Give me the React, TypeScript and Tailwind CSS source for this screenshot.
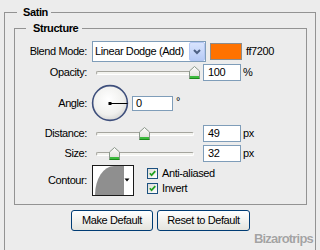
import React from "react";

function Thumb() {
  return (
    <svg width="11" height="13" viewBox="0 0 11 13">
      <defs>
        <linearGradient id="thumbFill" x1="0" y1="0" x2="0" y2="1">
          <stop offset="0" stopColor="#ffffff" />
          <stop offset="1" stopColor="#dadad2" />
        </linearGradient>
      </defs>
      <path d="M5.5 0.5 L10.5 5 V12.5 H0.5 V5 Z" fill="url(#thumbFill)" stroke="#8a978a" />
      <rect x="1" y="10" width="9" height="2" fill="#3dbb3d" />
      <path d="M0.5 12.5 H10.5" stroke="#1b8a1b" />
    </svg>
  );
}

function Slider({ pos }: { pos: number }) {
  return (
    <div className="relative flex w-[106px] h-full items-start">
      <div className="mt-[7px] mx-[4px] flex-1 h-[4px] rounded-full border border-[#a5a59e] border-b-white border-r-white bg-[#f3f3ef]" />
      <div className="absolute top-[2px]" style={{ left: pos }}>
        <Thumb />
      </div>
    </div>
  );
}

function Field({ value, className = "w-[38px] h-[17px]" }: { value: string; className?: string }) {
  return (
    <div className={`${className} border border-[#7f9db9] bg-white pl-[4px] flex items-center`}>
      {value}
    </div>
  );
}

function Row({ label, className, children }: { label: string; className: string; children: React.ReactNode }) {
  return (
    <div className={`flex ${className}`}>
      <div className="w-[72px] h-full flex items-center justify-end">{label}</div>
      <div className="ml-[5px] h-full flex items-center">{children}</div>
    </div>
  );
}

function Check({ label }: { label: string }) {
  return (
    <div className="flex items-center h-[11px]">
      <div className="w-[11px] h-[11px] border border-[#1c5180] bg-gradient-to-br from-[#dcdcd7] to-white flex items-center justify-center">
        <svg width="7" height="7" viewBox="0 0 7 7">
          <path d="M0.8 3.2 L2.6 5.2 L6.3 1.2" stroke="#21a121" strokeWidth="1.7" fill="none" />
        </svg>
      </div>
      <span className="ml-[4px]">{label}</span>
    </div>
  );
}

function XpButton({ label, w }: { label: string; w: string }) {
  return (
    <div className={`${w} h-[21px] rounded-[3px] border border-[#003c74] bg-gradient-to-b from-white to-[#e4e4de] flex items-center justify-center`}>
      {label}
    </div>
  );
}

export default function App() {
  return (
    <div className="w-[320px] h-[250px] overflow-hidden bg-[#ececec] px-[4px] pt-[5px] text-[11px] leading-[13px] tracking-[-0.4px] text-black font-['Liberation_Sans',Arial,sans-serif]">
      <fieldset className="border border-[#939393] min-h-[270px] pl-[9px] pr-[8px]">
        <legend className="ml-[3px] pl-[6px] pr-[3px] font-bold leading-[14px]">Satin</legend>

        <fieldset className="mt-[2px] border border-[#939393] pb-[8px]">
          <legend className="ml-[11px] pl-[7px] pr-[4px] font-bold leading-[14px]">Structure</legend>

          <Row label="Blend Mode:" className="mt-[6px] h-[21px]">
            <div className="w-[114px] h-[21px] border border-[#7f9db9] bg-white flex items-center">
              <span className="flex-1 pl-[2px] whitespace-nowrap">Linear Dodge (Add)</span>
              <div className="w-[16px] h-full rounded-[2px] border border-[#b3c6f2] bg-gradient-to-b from-[#d8e4fd] to-[#b6caf6] flex items-center justify-center">
                <svg width="8" height="6" viewBox="0 0 8 6">
                  <path d="M1 1 L4 4 L7 1" stroke="#4d6185" strokeWidth="2" fill="none" />
                </svg>
              </div>
            </div>
            <div className="ml-[4px] w-[32px] h-[17px] bg-[#ff7200] border border-[#8c8c8c]" />
            <span className="ml-[4px]">ff7200</span>
          </Row>

          <Row label="Opacity:" className="mt-[2px] h-[17px]">
            <Slider pos={97} />
            <div className="ml-[5px]">
              <Field value="100" />
            </div>
            <span className="ml-[2px]">%</span>
          </Row>

          <Row label="Angle:" className="mt-[3px] h-[38px]">
            <svg width="38" height="38" viewBox="0 0 38 38" className="-ml-[1px]">
              <defs>
                <radialGradient id="dialFill" cx="0.45" cy="0.4" r="0.62">
                  <stop offset="0" stopColor="#ffffff" />
                  <stop offset="0.7" stopColor="#f0f0ee" />
                  <stop offset="1" stopColor="#d6d6d4" />
                </radialGradient>
              </defs>
              <circle cx="19" cy="19" r="17.4" fill="url(#dialFill)" stroke="#3e4f7c" strokeWidth="1.6" />
              <line x1="19" y1="19.5" x2="36.5" y2="19.5" stroke="#000" />
              <rect x="17.5" y="18" width="3" height="3" fill="#000" />
            </svg>
            <div className="ml-[3px]">
              <Field value="0" className="w-[41px] h-[15px] !pl-[3px]" />
            </div>
            <span className="ml-[3px] self-start mt-[11px]">°</span>
          </Row>

          <Row label="Distance:" className="mt-[3px] h-[17px]">
            <Slider pos={47} />
            <div className="ml-[5px]">
              <Field value="49" />
            </div>
            <span className="ml-[2px]">px</span>
          </Row>

          <Row label="Size:" className="mt-[3px] h-[17px]">
            <Slider pos={17} />
            <div className="ml-[5px]">
              <Field value="32" />
            </div>
            <span className="ml-[2px]">px</span>
          </Row>

          <Row label="Contour:" className="mt-[3px] h-[31px]">
            <div className="h-full flex items-start">
              <svg width="42" height="31" viewBox="0 0 42 31">
                <rect x="0.5" y="0.5" width="41" height="30" fill="#ffffff" stroke="#1a1a1a" />
                <path d="M3 30 A 19 29 0 0 1 22 1 L 32 1 L 32 30 Z" fill="#8f8f8f" />
                <path d="M32.5 13.5 h5 l-2.5 3 z" fill="#000" />
              </svg>
              <div className="ml-[13px] mt-[3px] flex flex-col gap-[4px]">
                <Check label="Anti-aliased" />
                <Check label="Invert" />
              </div>
            </div>
          </Row>
        </fieldset>

        <div className="mt-[5px] flex justify-center gap-[4px]">
          <XpButton label="Make Default" w="w-[82px]" />
          <XpButton label="Reset to Default" w="w-[93px]" />
        </div>

        <div className="mt-[2px] -mr-[6px] flex justify-end">
          <span className="text-[13px] leading-[12px] font-bold tracking-[-0.8px] text-[#a3a3a3] [text-shadow:0_0_1px_#ffffff]">
            Bizarotrips
          </span>
        </div>
      </fieldset>
    </div>
  );
}
